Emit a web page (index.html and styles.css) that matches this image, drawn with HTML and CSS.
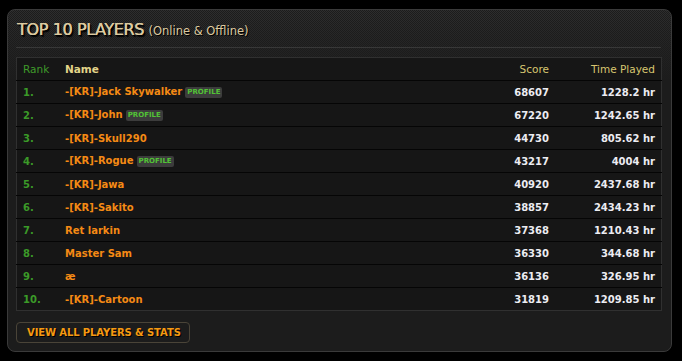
FILE: index.html
```html
<!DOCTYPE html>
<html>
<head>
<meta charset="utf-8">
<link rel="stylesheet" href="styles.css">
</head>
<body>
<div class="panel">
  <h2 class="title">TOP 10 PLAYERS <span class="sub">(Online &amp; Offline)</span></h2>
  <div class="rule"></div>
  <table class="players">
    <thead>
      <tr><th class="rank">Rank</th><th class="name">Name</th><th class="score">Score</th><th class="time">Time Played</th></tr>
    </thead>
    <tbody>
      <tr><td class="rank">1.</td><td class="name">-[KR]-Jack Skywalker<span class="badge">PROFILE</span></td><td class="score">68607</td><td class="time">1228.2 hr</td></tr>
      <tr><td class="rank">2.</td><td class="name">-[KR]-John<span class="badge">PROFILE</span></td><td class="score">67220</td><td class="time">1242.65 hr</td></tr>
      <tr><td class="rank">3.</td><td class="name">-[KR]-Skull290</td><td class="score">44730</td><td class="time">805.62 hr</td></tr>
      <tr><td class="rank">4.</td><td class="name">-[KR]-Rogue<span class="badge">PROFILE</span></td><td class="score">43217</td><td class="time">4004 hr</td></tr>
      <tr><td class="rank">5.</td><td class="name">-[KR]-Jawa</td><td class="score">40920</td><td class="time">2437.68 hr</td></tr>
      <tr><td class="rank">6.</td><td class="name">-[KR]-Sakito</td><td class="score">38857</td><td class="time">2434.23 hr</td></tr>
      <tr><td class="rank">7.</td><td class="name">Ret larkin</td><td class="score">37368</td><td class="time">1210.43 hr</td></tr>
      <tr><td class="rank">8.</td><td class="name">Master Sam</td><td class="score">36330</td><td class="time">344.68 hr</td></tr>
      <tr><td class="rank">9.</td><td class="name">æ</td><td class="score">36136</td><td class="time">326.95 hr</td></tr>
      <tr><td class="rank">10.</td><td class="name">-[KR]-Cartoon</td><td class="score">31819</td><td class="time">1209.85 hr</td></tr>
    </tbody>
  </table>
  <a class="btn" href="#">VIEW ALL PLAYERS &amp; STATS</a>
</div>
</body>
</html>
```
FILE: styles.css
```css
html, body { margin: 0; padding: 0; background: #000; }
body { font-family: "DejaVu Sans", Verdana, sans-serif; }
.panel {
  margin: 9px 0 0 7px;
  height: 341px;
  box-sizing: content-box;
  border: 1px solid #3a3a3a;
  border-radius: 8px;
  background:
    linear-gradient(to bottom, rgba(28,28,28,0) 0, rgba(28,28,28,0.3) 20px, #1c1c1c 70px),
    repeating-conic-gradient(#2e2e2e 0 25%, #1c1c1c 0 50%) 0 0 / 2px 2px;
  display: flex;
  flex-direction: column;
  padding: 0 10px 0 8px;
  width: 645px;
}
.title {
  margin: 10px 0 0 1px;
  font-size: 16px;
  font-weight: normal;
  color: #dccaa0;
  text-shadow: 0.4px 0 0 #dccaa0, 1px 1px 0 #000, 2px 2px 1px #000;
  line-height: 20px;
  letter-spacing: -0.4px;
}
.sub { font-size: 11.5px; letter-spacing: 0; text-shadow: 1px 1px 0 #000; }
.rule { height: 1px; background: #383838; margin-top: 6px; }
.players {
  margin-top: 9px;
  border-collapse: collapse;
  width: 646px;
  background: #161616;
  border: 1px solid #303030;
  font-size: 10.5px;
}
.players th, .players td {
  height: 22px;
  padding: 0 6px;
  border-bottom: 1px solid #050505;
  white-space: nowrap;
}
.players th { font-weight: normal; color: #d8c670; text-align: left; }
.players th.rank { color: #3f9a2a; }
.players th.name { font-weight: bold; color: #e2d489; }
.players td { font-weight: bold; font-size: 10px; }
.players td.rank { color: #3b9a28; width: 30px; }
.players td.name { color: #f58a14; }
.players th.score, .players td.score { text-align: right; width: 80px; }
.players th.time, .players td.time { text-align: right; width: 94px; }
.players td.score, .players td.time { color: #ececf2; }
.players tr:last-child td { border-bottom: none; }
.badge {
  display: inline-block;
  vertical-align: 1px;
  margin-left: 3px;
  font-size: 7px;
  font-weight: bold;
  line-height: 11px;
  padding: 0 2px;
  border-radius: 2px;
  background: #3c3c3c;
  color: #52c236;
}
.btn {
  align-self: flex-start;
  margin-top: 11px;
  margin-left: 0;
  padding: 0 8px 0 10px;
  height: 19px;
  line-height: 19px;
  border: 1px solid #4a4438;
  border-radius: 4px;
  color: #f59a12;
  font-weight: bold;
  font-size: 10px;
  letter-spacing: -0.1px;
  text-decoration: none;
  text-shadow: 1px 1px 0 #000;
}
```
